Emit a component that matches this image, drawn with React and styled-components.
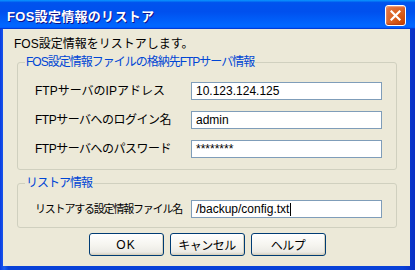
import React from 'react';
import styled, { createGlobalStyle } from 'styled-components';

const GlobalStyle = createGlobalStyle`
    html, body {
        margin: 0;
        padding: 0;
        background: #ffffff;
    }
    body {
        font-family: "Liberation Sans", "Noto Sans CJK JP", sans-serif;
        font-size: 12px;
    }
`;

const Window = styled.div`
    width: 415px;
    height: 270px;
    display: flex;
    flex-direction: column;
    background: linear-gradient(90deg, #0a3ce0 0%, #1c5ef0 1%, #0841d8 2%, #0841d8 97%, #0a2fc4 100%);
    overflow: hidden;
`;

const TitleBar = styled.div`
    height: 29px;
    flex: none;
    display: flex;
    align-items: center;
    justify-content: space-between;
    padding: 1px 9px 0 7px;
    box-sizing: border-box;
    background: linear-gradient(180deg, #0997ff 0%, #0053ee 9%, #0050ee 40%, #0066ff 86%, #0066ff 92%, #005bff 95%, #003dd7 97%, #003dd7 100%);
`;

const Title = styled.span`
    color: #ffffff;
    font-weight: bold;
    font-size: 13px;
    letter-spacing: 0.3px;
    text-shadow: 1px 1px #0f1089;
`;

const CloseButton = styled.div`
    width: 21px;
    height: 21px;
    box-sizing: border-box;
    border: 1px solid #ffffff;
    border-radius: 3px;
    background: radial-gradient(circle at 90% 90%, #cc4600 0%, #dc6527 55%, #e47c50 100%);
    box-shadow: inset 0 -1px 2px #b33a13, inset 1px 1px 1px #f5a783;
    display: flex;
    align-items: center;
    justify-content: center;
`;

const Client = styled.div`
    flex: 1;
    margin: 0 5px 4px 3px;
    background: #ece9d8;
    padding: 8px 13px 0 11px;
    display: flex;
    flex-direction: column;
    color: #000000;
`;

const Intro = styled.div`
    line-height: 14px;
    height: 14px;
    margin-bottom: 4px;
    white-space: nowrap;
`;

const Group = styled.fieldset`
    margin: ${p => p.$top}px 0 0 3px;
    padding: 0;
    border: 1px solid #d0d0bf;
    border-radius: 3px;
    min-width: 0;
`;

const Legend = styled.legend`
    margin-left: 7px;
    padding: 0 1px;
    color: #0046d5;
    line-height: 14px;
    letter-spacing: -1px;
    white-space: nowrap;
`;

const GroupBody = styled.div`
    display: flex;
    flex-direction: column;
    gap: 11px;
    padding: ${p => p.$pt}px 14px ${p => p.$pb}px 17px;
`;

const Row = styled.div`
    display: flex;
    align-items: center;
    justify-content: space-between;
    height: 18px;
`;

const Label = styled.span`
    line-height: 14px;
    white-space: nowrap;
    font-size: ${p => p.$size || 12}px;
    letter-spacing: ${p => p.$ls || 0}px;
`;

const Edit = styled.div`
    flex: none;
    width: 191px;
    height: 18px;
    box-sizing: border-box;
    border: 1px solid #7f9db9;
    background: #ffffff;
    padding: 0 4px;
    display: flex;
    align-items: center;
    font-size: 12px;
    white-space: nowrap;
`;

const Caret = styled.span`
    display: inline-block;
    width: 1px;
    height: 13px;
    background: #000000;
    margin-left: 1px;
`;

const ButtonBar = styled.div`
    display: flex;
    justify-content: center;
    gap: 6px;
    margin-top: 5px;
    padding-left: 3px;
`;

const Button = styled.div`
    width: 75px;
    height: 23px;
    box-sizing: border-box;
    border: 1px solid #003c74;
    border-radius: 3px;
    background: linear-gradient(180deg, #ffffff 0%, #f6f5f0 50%, #ecebe5 85%, #d6d0c5 100%);
    box-shadow: inset -1px -1px 0 #d8d2bd;
    display: flex;
    align-items: center;
    justify-content: center;
    letter-spacing: ${p => (p.$wide ? '1px' : '-0.5px')};
`;

export default function App() {
    return (
        <>
            <GlobalStyle />
            <Window>
                <TitleBar>
                    <Title>FOS設定情報のリストア</Title>
                    <CloseButton>
                        <svg width="11" height="11" viewBox="0 0 11 11">
                            <path d="M1.5 1.5 L9.5 9.5 M9.5 1.5 L1.5 9.5" stroke="#ffffff" strokeWidth="2.2" strokeLinecap="square" />
                        </svg>
                    </CloseButton>
                </TitleBar>
                <Client>
                    <Intro>FOS設定情報をリストアします。</Intro>
                    <Group $top={0}>
                        <Legend>FOS設定情報ファイルの格納先FTPサーバ情報</Legend>
                        <GroupBody $pt={13} $pb={11}>
                            <Row>
                                <Label>FTPサーバのIPアドレス</Label>
                                <Edit>10.123.124.125</Edit>
                            </Row>
                            <Row>
                                <Label $ls={-0.5}>FTPサーバへのログイン名</Label>
                                <Edit>admin</Edit>
                            </Row>
                            <Row>
                                <Label $ls={-0.5}>FTPサーバへのパスワード</Label>
                                <Edit>********</Edit>
                            </Row>
                        </GroupBody>
                    </Group>
                    <Group $top={6}>
                        <Legend>リストア情報</Legend>
                        <GroupBody $pt={10} $pb={9}>
                            <Row>
                                <Label $size={11} $ls={-1.2}>リストアする設定情報ファイル名</Label>
                                <Edit>/backup/config.txt<Caret /></Edit>
                            </Row>
                        </GroupBody>
                    </Group>
                    <ButtonBar>
                        <Button $wide>OK</Button>
                        <Button>キャンセル</Button>
                        <Button>ヘルプ</Button>
                    </ButtonBar>
                </Client>
            </Window>
        </>
    );
}
